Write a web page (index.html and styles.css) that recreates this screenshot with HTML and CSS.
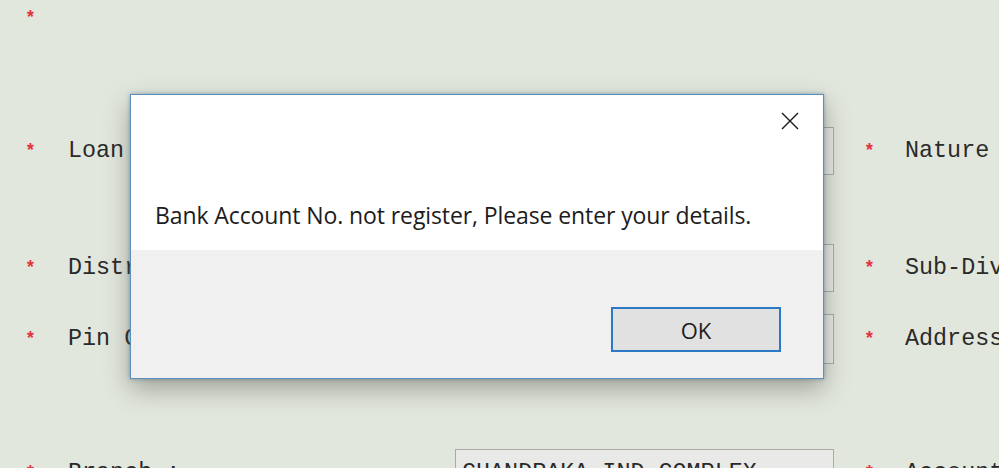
FILE: index.html
```html
<!DOCTYPE html>
<html lang="en">
<head>
<meta charset="utf-8">
<title>Loan Application</title>
<link rel="stylesheet" href="styles.css">
</head>
<body>
  <form class="form">
    <div class="row row-top">
      <span class="req">*</span>
    </div>
    <div class="row row-loan">
      <span class="req">*</span>
      <span class="label">Loan Type :</span>
      <span class="field"></span>
      <span class="req req-right">*</span>
      <span class="label">Nature of Loan :</span>
    </div>
    <div class="row row-dist">
      <span class="req">*</span>
      <span class="label">District :</span>
      <span class="field"></span>
      <span class="req req-right">*</span>
      <span class="label">Sub-Division :</span>
    </div>
    <div class="row row-pin">
      <span class="req">*</span>
      <span class="label">Pin Code :</span>
      <span class="field"></span>
      <span class="req req-right">*</span>
      <span class="label">Address :</span>
    </div>
    <div class="row row-branch">
      <span class="req">*</span>
      <span class="label">Branch :</span>
      <span class="field field-filled">CHANDRAKA IND COMPLEX</span>
      <span class="req req-right">*</span>
      <span class="label">Account No. :</span>
    </div>
  </form>

  <div class="dialog" role="alertdialog">
    <div class="dialog-body">
      <button class="dialog-close" type="button" aria-label="Close">
        <svg width="18" height="18" viewBox="0 0 18 18">
          <path d="M1 1 L17 17 M17 1 L1 17" stroke="#1a1a1a" stroke-width="1.4" fill="none"/>
        </svg>
      </button>
      <p class="dialog-msg">Bank Account No. not register, Please enter your details.</p>
    </div>
    <div class="dialog-footer">
      <button class="dialog-ok" type="button">OK</button>
    </div>
  </div>
</body>
</html>
```

FILE: styles.css
```css
html, body {
  margin: 0;
  padding: 0;
}

body {
  width: 999px;
  height: 468px;
  overflow: hidden;
  background: #e2e7de;
  position: relative;
  font-family: "Liberation Mono", "Courier New", monospace;
  color: #2a2a2a;
}

/* background form grid */
.form {
  display: flex;
  flex-direction: column;
  width: 999px;
  height: 468px;
  overflow: hidden;
}

.row {
  display: grid;
  grid-template-columns: 44px 387px 379px 71px 94px;
  align-items: center;
  padding-left: 24px;
  height: 48px;
  flex-shrink: 0;
  white-space: nowrap;
  font-size: 23.4px;
}

.row-top { height: 36px; }
.row-loan { margin-top: 91px; }
.row-dist { margin-top: 69px; }
.row-pin { margin-top: 22px; height: 50px; }
.row-branch { margin-top: 85px; }

.req {
  color: #e2333f;
  font-size: 18px;
  font-weight: bold;
  line-height: 1;
  padding-left: 1px;
  align-self: center;
}

.req-right {
  padding-left: 30px;
}

.label {
  overflow: hidden;
}

.field {
  box-sizing: border-box;
  height: 100%;
  border: 1px solid #a9aca6;
  background: #e9eae7;
  padding: 8px 6px;
  overflow: hidden;
  font-size: 23.4px;
  line-height: 30px;
}

/* message box */
.dialog {
  position: absolute;
  left: 130px;
  top: 94px;
  width: 694px;
  height: 285px;
  box-sizing: border-box;
  border: 1px solid #5d8fbd;
  background: #fff;
  box-shadow: 0 10px 24px rgba(60, 60, 50, 0.4), 0 0 4px rgba(80, 120, 160, 0.6);
  display: flex;
  flex-direction: column;
  font-family: "Open Sans", "Noto Sans", sans-serif;
}

.dialog-body {
  position: relative;
  height: 155px;
  background: #fff;
}

.dialog-close {
  position: absolute;
  right: 22px;
  top: 15px;
  width: 22px;
  height: 22px;
  padding: 2px;
  border: 0;
  background: transparent;
  display: flex;
  align-items: center;
  justify-content: center;
}

.dialog-msg {
  margin: 0;
  padding: 104px 0 0 24px;
  font-size: 23px;
  line-height: 32px;
  color: #1c1c1c;
  letter-spacing: -0.1px;
}

.dialog-footer {
  flex: 1;
  background: #f0f0f0;
  display: flex;
  justify-content: flex-end;
  align-items: flex-start;
  padding: 57px 42px 0 0;
}

.dialog-ok {
  width: 170px;
  height: 45px;
  box-sizing: border-box;
  border: 2.5px solid #2b78c6;
  background: #e1e1e1;
  font-family: "Open Sans", "Noto Sans", sans-serif;
  font-size: 22px;
  color: #1c1c1c;
  padding: 0;
}
```
